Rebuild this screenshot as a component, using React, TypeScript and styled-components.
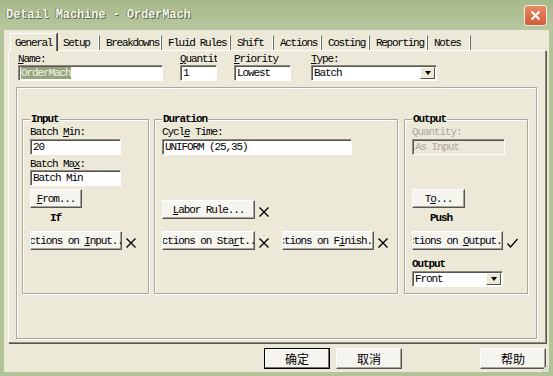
import React from 'react'
import styled, { createGlobalStyle } from 'styled-components'

const mono = `"Liberation Mono", "DejaVu Sans Mono", monospace`
const cjk = `"Noto Sans CJK SC", "Noto Sans", sans-serif`

const GlobalStyle = createGlobalStyle`
  body {
    margin: 0;
    background: #fff;
    font-family: ${mono};
    font-size: 11px;
    letter-spacing: -1.1px;
    color: #000;
  }
`

const Window = styled.div`
  position: relative;
  width: 553px;
  height: 376px;
  box-sizing: border-box;
  display: flex;
  flex-direction: column;
  background: #b3c398;
`
const TitleBar = styled.div`
  height: 30px;
  display: flex;
  align-items: center;
  justify-content: space-between;
  padding: 0 6px 0 6px;
  background: linear-gradient(#a7b98a, #b8c79f);
`
const TitleText = styled.div`
  font-weight: bold;
  font-size: 12px;
  letter-spacing: -0.1px;
  color: #f4f6ee;
  text-shadow: 1px 1px 0 #5e6b45, -1px 0 0 #7d8a62;
`
const CloseButton = styled.div`
  width: 23px;
  height: 21px;
  box-sizing: border-box;
  border: 1px solid #f3f0ea;
  border-radius: 3px;
  background: linear-gradient(#e88a63, #d45a37);
  display: flex;
  align-items: center;
  justify-content: center;
`
const Client = styled.div`
  flex: 1;
  margin: 0 4px 4px 4px;
  background: #ece9d8;
  display: flex;
  flex-direction: column;
  padding: 3px 3px 0 4px;
`
const TabStrip = styled.div`
  display: flex;
  align-items: flex-end;
  height: 17px;
  padding-left: 2px;
`
const Tab = styled.div<{ $w: number; $active?: boolean }>`
  width: ${p => p.$w}px;
  box-sizing: border-box;
  height: ${p => (p.$active ? 18 : 15)}px;
  padding-left: ${p => (p.$active ? 4 : 5)}px;
  display: flex;
  align-items: center;
  white-space: nowrap;
  letter-spacing: -1.3px;
  position: relative;
  z-index: ${p => (p.$active ? 1 : 0)};
  margin-bottom: ${p => (p.$active ? -1 : 0)}px;
  background: #ece9d8;
  border-top: 1px solid ${p => (p.$active ? '#fff' : 'transparent')};
  border-left: 1px solid ${p => (p.$active ? '#fff' : 'transparent')};
  border-right: 1px solid #716f64;
  box-shadow: ${p => (p.$active ? '1px 0 0 #404040' : '-1px 0 0 #fff inset')};
`
const TabPanel = styled.div`
  height: 293px;
  box-sizing: border-box;
  border-top: 1px solid #fff;
  border-left: 1px solid #fff;
  border-right: 1px solid #8d8a7a;
  border-bottom: 1px solid #8d8a7a;
  box-shadow: 1px 1px 0 #555;
  padding: 2px 8px 3px 7px;
  display: flex;
  flex-direction: column;
`
const TopRow = styled.div`
  display: grid;
  grid-template-columns: 145px 37px 57px 129px;
  column-gap: 17px;
  margin-left: 2px;
`
const Field = styled.div<{ $ml?: number }>`
  display: flex;
  flex-direction: column;
  margin-left: ${p => p.$ml || 0}px;
  min-width: 0;
`
const Label = styled.div<{ $disabled?: boolean; $mt?: number; $bold?: boolean }>`
  height: 12px;
  line-height: 12px;
  overflow: hidden;
  white-space: nowrap;
  margin-top: ${p => p.$mt || 0}px;
  color: ${p => (p.$disabled ? '#aca899' : '#000')};
  font-weight: ${p => (p.$bold ? 'bold' : 'normal')};
`
const U = styled.span`
  text-decoration: underline;
`
const TextBox = styled.div<{ $w?: number; $mt?: number; $disabled?: boolean }>`
  width: ${p => (p.$w ? `${p.$w}px` : 'auto')};
  height: 16px;
  box-sizing: border-box;
  margin-top: ${p => p.$mt || 0}px;
  border: 1px solid;
  border-color: #8d8a7a #fff #fff #8d8a7a;
  box-shadow: inset 1px 1px 0 #555;
  background: ${p => (p.$disabled ? '#ece9d8' : '#fff')};
  color: ${p => (p.$disabled ? '#aca899' : '#000')};
  padding-left: 2px;
  display: flex;
  align-items: center;
  white-space: pre;
  overflow: hidden;
`
const Selected = styled.span`
  background: #98a47c;
  color: #f2f4ea;
`
const Combo = styled(TextBox)`
  justify-content: space-between;
  padding-right: 1px;
`
const DropButton = styled.div`
  width: 15px;
  height: 12px;
  box-sizing: border-box;
  background: #ece9d8;
  border: 1px solid;
  border-color: #fff #555 #555 #fff;
  display: flex;
  align-items: center;
  justify-content: center;
`
const Arrow = styled.div`
  width: 0;
  height: 0;
  border-left: 3.5px solid transparent;
  border-right: 3.5px solid transparent;
  border-top: 4px solid #000;
`
const InnerBox = styled.div`
  flex: 1;
  margin-top: 6px;
  border: 1px solid #aca899;
  box-shadow: 1px 1px 0 #fff, inset 1px 1px 0 #fff;
  display: flex;
  align-items: flex-start;
  padding: 25px 8px 0 5px;
`
const Group = styled.fieldset<{ $w: number; $ml?: number }>`
  width: ${p => p.$w}px;
  height: 181px;
  box-sizing: border-box;
  margin: 0 0 0 ${p => p.$ml || 0}px;
  min-inline-size: 0;
  padding: 0 0 0 7px;
  border: 1px solid #aca899;
  box-shadow: 1px 1px 0 #fff, inset 1px 1px 0 #fff;
  display: flex;
  flex-direction: column;
  align-items: flex-start;
`
const Legend = styled.legend`
  padding: 0 1px;
  margin-left: 0;
  font-weight: bold;
  line-height: 12px;
`
const Row = styled.div<{ $mt?: number }>`
  display: flex;
  align-items: center;
  margin-top: ${p => p.$mt || 0}px;
`
const Button = styled.div<{ $w: number; $cjk?: boolean; $default?: boolean; $ml?: number }>`
  width: ${p => p.$w}px;
  height: ${p => (p.$cjk ? 21 : 19)}px;
  flex: none;
  box-sizing: border-box;
  margin-left: ${p => p.$ml || 0}px;
  background: #f5f4ee;
  border: 1px solid;
  border-color: ${p => (p.$default ? '#000' : '#fff #555 #555 #fff')};
  box-shadow: ${p => (p.$default ? 'inset -1px -1px 0 #716f64, inset 1px 1px 0 #fff' : 'inset -1px -1px 0 #a7a493')};
  display: flex;
  align-items: center;
  justify-content: center;
  overflow: hidden;
  white-space: pre;
  font-family: ${p => (p.$cjk ? cjk : mono)};
  font-size: ${p => (p.$cjk ? 12 : 11)}px;
  letter-spacing: ${p => (p.$cjk ? 0 : -1.1)}px;
`
const Note = styled.div<{ $ml: number; $mt: number }>`
  margin: ${p => p.$mt}px 0 0 ${p => p.$ml}px;
  font-weight: bold;
  line-height: 12px;
`
const Mark = styled.svg`
  margin-left: 3px;
  margin-top: 5px;
  flex: none;
`
const Footer = styled.div`
  display: flex;
  justify-content: flex-end;
  padding: 5px 0 0 0;
  gap: 6px;
`
const Spacer = styled.div`
  width: 66px;
`
const Grip = styled.svg`
  position: absolute;
  right: 3px;
  bottom: 3px;
`

const Cross = () => (
  <Mark width="12" height="12" viewBox="0 0 12 12">
    <path d="M1.5 1.5 L10.5 10.5 M10.5 1.5 L1.5 10.5" stroke="#000" strokeWidth="1.4" />
  </Mark>
)

const Check = () => (
  <Mark width="13" height="12" viewBox="0 0 13 12">
    <path d="M1.5 6.5 L4.5 10 L11.5 2" stroke="#000" strokeWidth="1.3" fill="none" />
  </Mark>
)

const tabs = [
  { label: 'General', w: 47 },
  { label: 'Setup', w: 43 },
  { label: 'Breakdowns', w: 62 },
  { label: 'Fluid Rules', w: 69 },
  { label: 'Shift', w: 43 },
  { label: 'Actions', w: 48 },
  { label: 'Costing', w: 48 },
  { label: 'Reporting', w: 58 },
  { label: 'Notes', w: 43 },
]

const App = () => (
  <>
    <GlobalStyle />
    <Window>
      <TitleBar>
        <TitleText>Detail Machine - OrderMach</TitleText>
        <CloseButton>
          <svg width="11" height="11" viewBox="0 0 11 11">
            <path d="M1.5 1.5 L9.5 9.5 M9.5 1.5 L1.5 9.5" stroke="#fff" strokeWidth="2" />
          </svg>
        </CloseButton>
      </TitleBar>
      <Client>
        <TabStrip>
          {tabs.map((t, i) => (
            <Tab key={t.label} $w={t.w} $active={i === 0}>{t.label}</Tab>
          ))}
        </TabStrip>
        <TabPanel>
          <TopRow>
            <Field>
              <Label><U>N</U>ame:</Label>
              <TextBox><Selected>OrderMach</Selected></TextBox>
            </Field>
            <Field>
              <Label><U>Q</U>uantity</Label>
              <TextBox>1</TextBox>
            </Field>
            <Field>
              <Label><U>P</U>riority</Label>
              <TextBox>Lowest</TextBox>
            </Field>
            <Field $ml={3}>
              <Label><U>T</U>ype:</Label>
              <Combo>Batch<DropButton><Arrow /></DropButton></Combo>
            </Field>
          </TopRow>
          <InnerBox>
            <Group $w={127}>
              <Legend>Input</Legend>
              <Label $mt={1}>Batch <U>M</U>in:</Label>
              <TextBox $w={91} $mt={1}>20</TextBox>
              <Label $mt={3}>Batch Ma<U>x</U>:</Label>
              <TextBox $w={91}>Batch Min</TextBox>
              <Row $mt={3}><Button $w={52}><U>F</U>rom...</Button></Row>
              <Note $ml={20} $mt={4}>If</Note>
              <Row $mt={7}>
                <Button $w={92}>{'Actions on '}<U>I</U>nput...</Button>
                <Cross />
              </Row>
            </Group>
            <Group $w={244} $ml={5}>
              <Legend>Duration</Legend>
              <Label $mt={1}>Cycl<U>e</U> Time:</Label>
              <TextBox $w={190} $mt={1}>UNIFORM (25,35)</TextBox>
              <Row $mt={45}>
                <Button $w={93}><U>L</U>abor Rule...</Button>
                <Cross />
              </Row>
              <Row $mt={12}>
                <Button $w={93}>{'Actions on Sta'}<U>r</U>t...</Button>
                <Cross />
                <Button $w={92} $ml={12}>{'Actions on F'}<U>i</U>nish...</Button>
                <Cross />
              </Row>
            </Group>
            <Group $w={124} $ml={6}>
              <Legend>Output</Legend>
              <Label $mt={1} $disabled>Quantity:<U> </U></Label>
              <TextBox $w={93} $mt={1} $disabled>As Input</TextBox>
              <Row $mt={34}><Button $w={53}>T<U>o</U>...</Button></Row>
              <Note $ml={18} $mt={4}>Push</Note>
              <Row $mt={7}>
                <Button $w={91}>{'Actions on '}<U>O</U>utput...</Button>
                <Check />
              </Row>
              <Label $mt={8} $bold>Output</Label>
              <Combo $w={91} $mt={1}>Front<DropButton><Arrow /></DropButton></Combo>
            </Group>
          </InnerBox>
        </TabPanel>
        <Footer>
          <Button $w={66} $cjk $default>确定</Button>
          <Button $w={66} $cjk>取消</Button>
          <Spacer />
          <Button $w={66} $cjk>帮助</Button>
        </Footer>
      </Client>
      <Grip width="11" height="11" viewBox="0 0 11 11">
        <path d="M10 2 L2 10 M10 5 L5 10 M10 8 L8 10" stroke="#fff" strokeWidth="1" />
        <path d="M11 2 L2 11 M11 5 L5 11 M11 8 L8 11" stroke="#a9b596" strokeWidth="1" />
      </Grip>
    </Window>
  </>
)

export default App
